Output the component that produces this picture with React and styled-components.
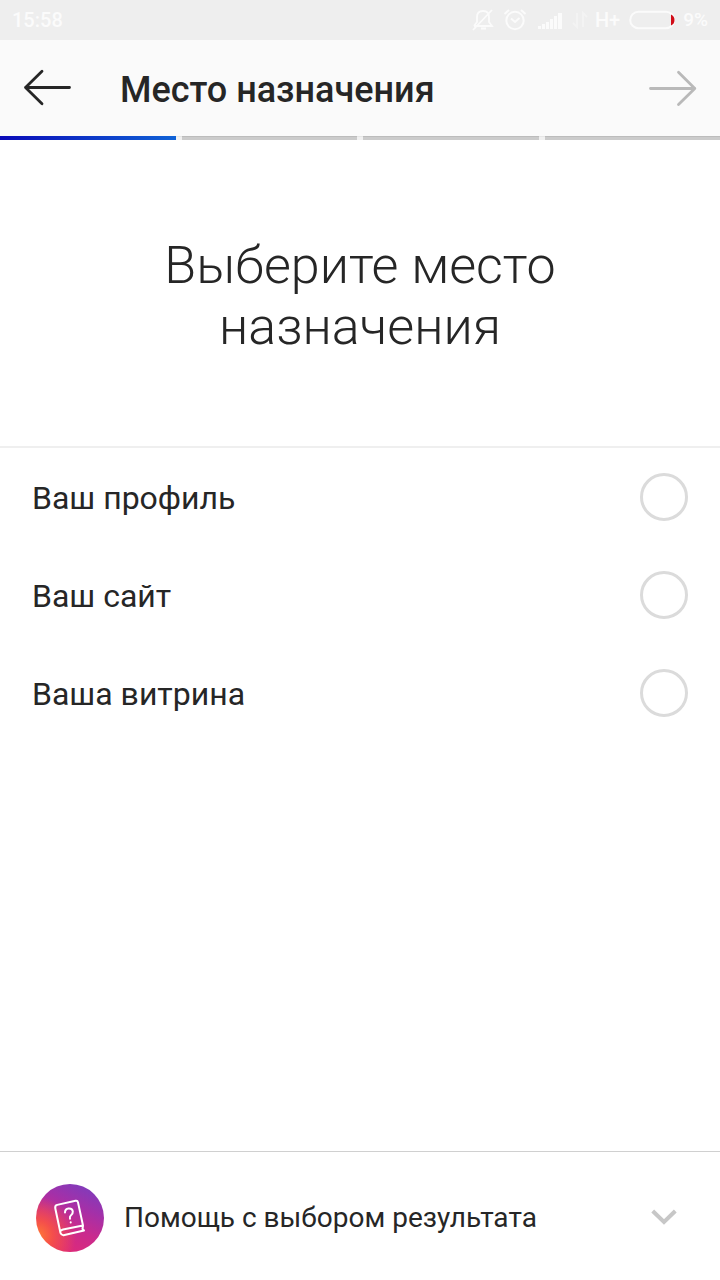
import React from "react";
import styled, { createGlobalStyle } from "styled-components";

const GlobalStyle = createGlobalStyle`
  * { box-sizing: border-box; }
  body {
    margin: 0;
    background: #fff;
    color: #262626;
    font-family: Roboto, "Noto Sans", sans-serif;
  }
`;

const Screen = styled.div`
  width: 720px;
  height: 1280px;
  display: flex;
  flex-direction: column;
  overflow: hidden;
  background: #fff;
`;

const StatusBar = styled.div`
  flex: none;
  height: 40px;
  padding: 0 12px 0 12px;
  display: flex;
  align-items: center;
  justify-content: space-between;
  background: #eee;
  color: #fbfbfb;
  font-size: 20px;
  font-weight: 500;
`;

const StatusGroup = styled.div`
  display: flex;
  align-items: center;
`;

const StatusText = styled.span`
  margin-left: ${(p) => p.$gap || 0}px;
  font-size: ${(p) => p.$size || 20}px;
  line-height: 40px;
`;

const StatusIcon = styled.svg`
  display: block;
  margin-left: ${(p) => p.$gap || 0}px;
`;

const Header = styled.header`
  flex: none;
  height: 96px;
  padding: 0 23px;
  display: flex;
  align-items: center;
  background: #fafafa;
`;

const Title = styled.h1`
  flex: 1;
  margin: 0 0 0 48px;
  padding-top: 4px;
  font-size: 36px;
  line-height: 44px;
  font-weight: 500;
  white-space: nowrap;
`;

const Arrow = styled.svg`
  display: block;
  flex: none;
  stroke: ${(p) => p.$color};
`;

const Steps = styled.div`
  flex: none;
  height: 4px;
  display: flex;
  gap: 6px;
  background: linear-gradient(#e6e6e6 1px, #f1f1f1 1px);
`;

const Step = styled.div`
  flex: 1;
  background: ${(p) =>
    p.$active
      ? "linear-gradient(90deg, #0a0ab8, #0f62d6)"
      : "linear-gradient(#bcbcbc 1px, #cbcbcb 1px)"};
`;

const Intro = styled.section`
  flex: none;
  height: 308px;
  padding-top: 95px;
  border-bottom: 2px solid #efefef;
  text-align: center;
`;

const Question = styled.h2`
  width: 460px;
  margin: 0 auto;
  font-size: 52px;
  line-height: 61px;
  font-weight: 300;
`;

const Options = styled.div`
  flex: 1;
`;

const Option = styled.div`
  height: 98px;
  padding: 0 32px;
  display: flex;
  align-items: center;
  justify-content: space-between;
  font-size: 32px;
`;

const OptionLabel = styled.span`
  padding-top: 2px;
`;

const Radio = styled.span`
  width: 48px;
  height: 48px;
  border: 3px solid #dbdbdb;
  border-radius: 50%;
`;

const Help = styled.footer`
  flex: none;
  height: 129px;
  padding: 4px 42px 0 36px;
  display: flex;
  align-items: center;
  border-top: 1px solid #d0d0d0;
`;

const HelpBadge = styled.span`
  flex: none;
  width: 68px;
  height: 68px;
  display: flex;
  border-radius: 50%;
  background:
    radial-gradient(circle at 2% 76%, #ff7a35 0%, rgba(250, 85, 65, 0.85) 18%, rgba(225, 45, 110, 0) 46%),
    linear-gradient(205deg, #7a3dbe 6%, #a430a8 34%, #c92a8e 58%, #de2a78 88%);
`;

const HelpText = styled.span`
  flex: 1;
  margin-left: 20px;
  padding-bottom: 2px;
  font-size: 28px;
`;

const options = ["Ваш профиль", "Ваш сайт", "Ваша витрина"];

function MutedBell() {
  return (
    <StatusIcon width="24" height="24" viewBox="0 0 24 24" fill="none" stroke="#fbfbfb" strokeWidth="1.8">
      <path d="M3 18H21L18 14V9Q18 3 12 3Q6 3 6 9V14L3 18M10 20.5H15M2 22L21 2" />
    </StatusIcon>
  );
}

function Alarm() {
  return (
    <StatusIcon $gap={8} width="24" height="24" viewBox="0 0 24 24" fill="none" stroke="#fbfbfb" strokeWidth="2">
      <circle cx="12" cy="12.5" r="8.7" />
      <path d="M1.5 6L6 2M18 2L22.5 6M8 10.5L12 14L16.5 10" />
    </StatusIcon>
  );
}

function Signal() {
  return (
    <StatusIcon $gap={10} width="26" height="20" viewBox="0 0 26 20" fill="#fbfbfb">
      <path d="M1 16H4V19H1ZM5 14H8V19H5ZM9 12H12V19H9ZM13 9H16V19H13ZM17 6H20V19H17ZM21 3H25V19H21Z" />
    </StatusIcon>
  );
}

function DataArrows() {
  return (
    <StatusIcon $gap={9} width="16" height="18" viewBox="0 0 16 18" fill="none" stroke="#f3f3f3" strokeWidth="2">
      <path d="M5 2V16L1 12M11 16V2L15 6" />
    </StatusIcon>
  );
}

function Battery() {
  return (
    <StatusIcon $gap={9} width="47" height="20" viewBox="0 0 47 20">
      <rect x="1.2" y="1.8" width="44" height="16.4" rx="8.2" fill="none" stroke="#fbfbfb" strokeWidth="2" />
      <path d="M42 4.5Q45.5 6 45.5 10Q45.5 14 42 15.5Z" fill="#d00c17" />
    </StatusIcon>
  );
}

export default function App() {
  return (
    <>
      <GlobalStyle />
      <Screen>
        <StatusBar>
          <StatusText>15:58</StatusText>
          <StatusGroup>
            <MutedBell />
            <Alarm />
            <Signal />
            <DataArrows />
            <StatusText $gap={7}>H+</StatusText>
            <Battery />
            <StatusText $gap={7} $size={19}>9%</StatusText>
          </StatusGroup>
        </StatusBar>
        <Header>
          <Arrow $color="#262626" width="49" height="40" viewBox="0 0 49 40" fill="none" strokeWidth="2.8" strokeLinecap="round" strokeLinejoin="round">
            <path d="M19 3.3L2.5 19.5L19 35.7M2.5 19.5H46.5" />
          </Arrow>
          <Title>Место назначения</Title>
          <Arrow $color="#b9b9b9" width="49" height="40" viewBox="0 0 49 40" fill="none" strokeWidth="2.8" strokeLinecap="round" strokeLinejoin="round">
            <path d="M30.5 4.3L46.8 20.5L30.5 36.5M46.8 20.5H2.5" />
          </Arrow>
        </Header>
        <Steps>
          <Step $active />
          <Step />
          <Step />
          <Step />
        </Steps>
        <Intro>
          <Question>Выберите место назначения</Question>
        </Intro>
        <Options>
          {options.map((label) => (
            <Option key={label}>
              <OptionLabel>{label}</OptionLabel>
              <Radio />
            </Option>
          ))}
        </Options>
        <Help>
          <HelpBadge>
            <svg width="68" height="68" viewBox="0 0 68 68" fill="none" stroke="#fff" strokeWidth="2" strokeLinecap="round" strokeLinejoin="round">
              <path d="M24.5 49L19.3 24.5Q18.7 21.5 21.2 20.9L39.5 16.8Q41.6 16.4 42 18.4L47 41.5L27 45.5Q23.6 46.3 24.5 49Q25.5 51.7 28.5 51L48 46.5M47 41.5L46.5 45L48 46.5" />
              <path d="M29 28.5Q29 25 32.5 24.5Q36.5 24.2 36.8 27.5Q37 30 34.8 31.5Q33.5 32.5 34 34.8M34.7 38.3V38.5" />
            </svg>
          </HelpBadge>
          <HelpText>Помощь с выбором результата</HelpText>
          <svg width="28" height="20" viewBox="0 0 28 20" fill="none" stroke="#c7c7c7" strokeWidth="4">
            <path d="M2.7 3L14 14L25.3 3" />
          </svg>
        </Help>
      </Screen>
    </>
  );
}
